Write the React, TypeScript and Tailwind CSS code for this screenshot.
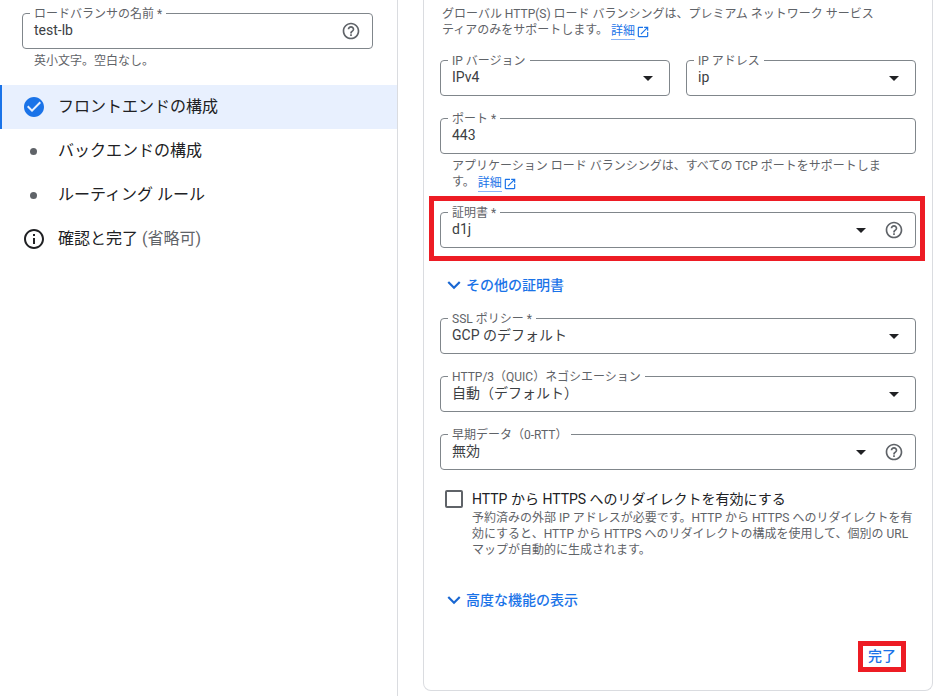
import React from 'react';

const HELP =
  'M11 18h2v-2h-2v2zm1-16C6.48 2 2 6.48 2 12s4.48 10 10 10 10-4.48 10-10S17.52 2 12 2zm0 18c-4.41 0-8-3.59-8-8s3.59-8 8-8 8 3.59 8 8-3.59 8-8 8zm0-14c-2.21 0-4 1.79-4 4h2c0-1.1.9-2 2-2s2 .9 2 2c0 2-3 1.75-3 5h2c0-2.25 3-2.5 3-5 0-2.21-1.79-4-4-4z';
const ARROW = 'M7 10l5 5 5-5z';
const CHEVRON = 'M16.59 8.59L12 13.17 7.41 8.59 6 10l6 6 6-6z';
const CHECK =
  'M12 2C6.48 2 2 6.48 2 12s4.48 10 10 10 10-4.48 10-10S17.52 2 12 2zm-2 15l-5-5 1.41-1.41L10 14.17l7.59-7.59L19 8l-9 9z';
const INFO =
  'M11 7h2v2h-2zm0 4h2v6h-2zm1-9C6.48 2 2 6.48 2 12s4.48 10 10 10 10-4.48 10-10S17.52 2 12 2zm0 18c-4.41 0-8-3.59-8-8s3.59-8 8-8 8 3.59 8 8-3.59 8-8 8z';
const OPEN =
  'M19 19H5V5h7V3H5c-1.11 0-2 .9-2 2v14c0 1.1.89 2 2 2h14c1.1 0 2-.9 2-2v-7h-2v7zM14 3v2h3.59l-9.83 9.83 1.41 1.41L19 6.41V10h2V3h-7z';

function Icon({ d, className }: { d: string; className: string }) {
  return (
    <svg viewBox="0 0 24 24" fill="currentColor" className={className}>
      <path d={d} />
    </svg>
  );
}

interface FieldProps {
  label: string;
  value: string;
  select?: boolean;
  help?: boolean;
  className?: string;
}

// Outlined form field, label sits on top of the border
function Field({ label, value, select, help, className = '' }: FieldProps) {
  return (
    <div className={`relative flex h-9 items-center rounded border border-[#80868b] pl-[11px] ${help ? 'pr-[11px]' : 'pr-[9px]'} ${className}`}>
      <span className="absolute -top-[7px] left-[7px] bg-white px-1 text-[12px] leading-[15px] text-[#5f6368]">{label}</span>
      <span className="flex-1 pb-[2px] text-[14px] leading-5 text-[#3c4043]">{value}</span>
      {select && <Icon d={ARROW} className="h-6 w-6 text-[#202124]" />}
      {help && <Icon d={HELP} className="ml-[11px] h-5 w-5 text-[#5f6368]" />}
    </div>
  );
}

function DocLink() {
  return (
    <span className="ml-[3px] inline-flex items-center align-[-1px] text-[#1a73e8]">
      <span className="border-b border-[#8ab4f8] leading-[15px]">詳細</span>
      <Icon d={OPEN} className="ml-px h-[14px] w-[14px]" />
    </span>
  );
}

function NavRow({ icon, children, active }: { icon: React.ReactNode; children: React.ReactNode; active?: boolean }) {
  return (
    <div className={`flex h-11 items-center border-l-2 pl-[20px] text-[16px] text-[#202124] ${active ? 'border-[#1a73e8] bg-[#e8f0fe]' : 'border-transparent'}`}>
      <span className="flex w-6 items-center justify-center">{icon}</span>
      <span className="ml-3 pb-[1px]">{children}</span>
    </div>
  );
}

function Dot() {
  return <span className="mr-[2px] h-[7px] w-[7px] rounded-full bg-[#5f6368]" />;
}

function Expander({ label, className }: { label: string; className: string }) {
  return (
    <div className={`flex h-6 items-center text-[14px] font-medium leading-5 text-[#1a73e8] ${className}`}>
      <Icon d={CHEVRON} className="h-[26px] w-[26px] shrink-0 text-[#1967d2]" />
      <span className="-ml-px">{label}</span>
    </div>
  );
}

export default function App() {
  return (
    <div
      className="flex h-[696px] w-[944px] overflow-hidden bg-white"
      style={{ fontFamily: 'Roboto, "Noto Sans CJK JP", sans-serif' }}
    >
      {/* Left: name + steps */}
      <div className="h-full w-[398px] shrink-0 border-r border-[#dadce0] pt-[13px]">
        <div className="pl-[22px] pr-6">
          <div className="relative flex h-9 items-center rounded border border-[#80868b] pl-[11px] pr-[11px]">
            <span className="absolute -top-[7px] left-[7px] bg-white px-1 text-[12px] leading-[15px] text-[#5f6368]">ロードバランサの名前 *</span>
            <span className="flex-1 pb-[3px] text-[14px] leading-5 text-[#3c4043]">test-lb</span>
            <Icon d={HELP} className="h-5 w-5 text-[#5f6368]" />
          </div>
          <div className="mt-1 pl-3 text-[12px] leading-4 text-[#5f6368]">英小文字。空白なし。</div>
        </div>
        <div className="mt-4">
          <NavRow active icon={<Icon d={CHECK} className="h-6 w-6 text-[#1a73e8]" />}>フロントエンドの構成</NavRow>
          <NavRow icon={<Dot />}>バックエンドの構成</NavRow>
          <NavRow icon={<Dot />}>ルーティング ルール</NavRow>
          <NavRow icon={<Icon d={INFO} className="h-6 w-6 text-[#202124]" />}>
            確認と完了 <span className="text-[#5f6368]">(省略可)</span>
          </NavRow>
        </div>
      </div>

      {/* Right: frontend card */}
      <div className="ml-[25px] h-[691px] w-[510px] shrink-0 rounded-b-lg border-x border-b border-[#dadce0] pl-4 pr-4 pt-[6px]">
        <p className="h-[34px] pl-[2px] pr-[30px] text-[12px] leading-4 text-[#5f6368]">
          グローバル HTTP(S) ロード バランシングは、プレミアム ネットワーク サービス ティアのみをサポートします。
          <DocLink />
        </p>
        <div className="mt-5 grid grid-cols-2 gap-4">
          <Field label="IP バージョン" value="IPv4" select />
          <Field label="IP アドレス" value="ip" select />
        </div>
        <Field className="mt-[22px]" label="ポート *" value="443" />
        <p className="mt-1 h-[34px] pl-3 pr-[28px] text-[12px] leading-4 text-[#5f6368]">
          アプリケーション ロード バランシングは、すべての TCP ポートをサポートします。
          <DocLink />
        </p>

        {/* Highlighted certificate field */}
        <div className="-ml-[11px] -mr-[9px] mt-1 border-[5px] border-[#ed1c24] pb-[8px] pl-[6px] pr-[4px] pt-[11px]">
          <Field label="証明書 *" value="d1j" select help />
        </div>

        <Expander label="その他の証明書" className="ml-px mt-3" />
        <Field className="mt-[21px]" label="SSL ポリシー *" value="GCP のデフォルト" select />
        <Field className="mt-[22px]" label="HTTP/3（QUIC）ネゴシエーション" value="自動（デフォルト）" select />
        <Field className="mt-[22px]" label="早期データ（0-RTT）" value="無効" select help />

        <div className="mt-[19px] flex">
          <span className="ml-[5px] mt-[1px] h-[18px] w-[18px] shrink-0 rounded-[2px] border-2 border-[#5f6368]" />
          <div className="ml-[9px]">
            <div className="text-[14px] leading-5 text-[#202124]">HTTP から HTTPS へのリダイレクトを有効にする</div>
            <p className="mt-px text-[12px] leading-4 text-[#5f6368]">
              予約済みの外部 IP アドレスが必要です。HTTP から HTTPS へのリダイレクトを有効にすると、HTTP から HTTPS へのリダイレクトの構成を使用して、個別の URL マップが自動的に生成されます。
            </p>
          </div>
        </div>

        <Expander label="高度な機能の表示" className="ml-px mt-[30px]" />

        <div className="mt-[29px] flex justify-end pr-[10px]">
          <div className="flex h-[31px] w-[48px] items-center justify-center border-[5px] border-[#ed1c24] text-[14px] font-medium text-[#1a73e8]">
            完了
          </div>
        </div>
      </div>
    </div>
  );
}
